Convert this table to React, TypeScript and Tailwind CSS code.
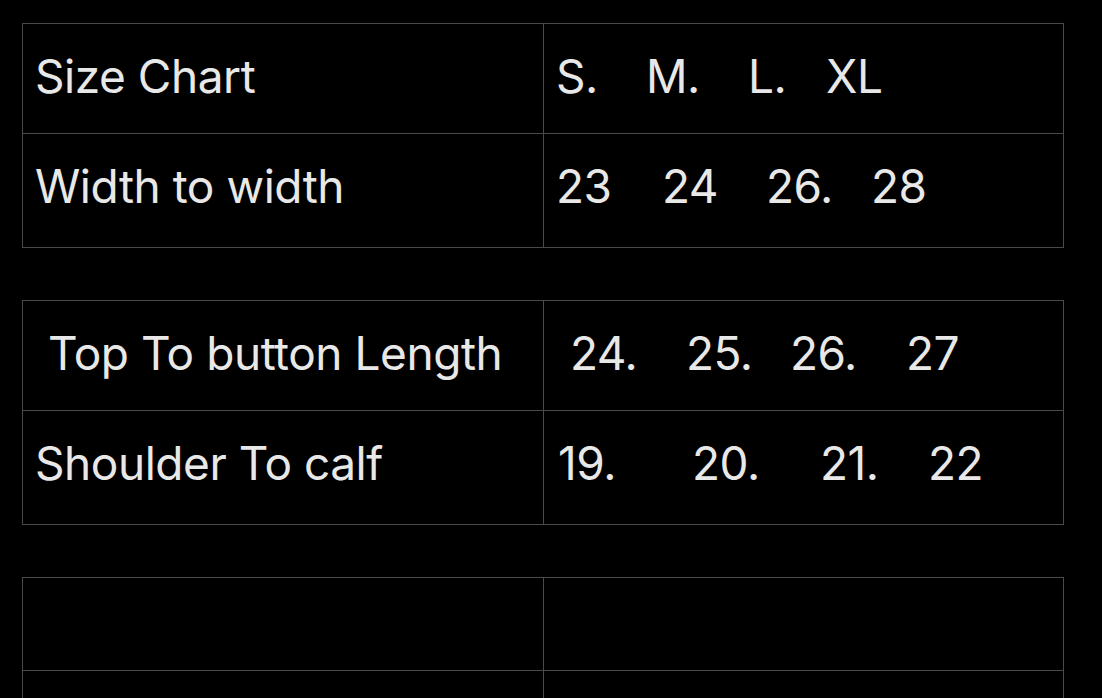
import React from 'react';

type Row = {
  label: string;
  labelPad?: string;
  values: { text: string; w: string }[];
  valuePad: string;
  height: string;
};

const tables: Row[][] = [
  [
    {
      label: 'Size Chart',
      height: 'h-[110px]',
      valuePad: 'pl-[12px]',
      values: [
        { text: 'S.', w: 'w-[90px]' },
        { text: 'M.', w: 'w-[102px]' },
        { text: 'L.', w: 'w-[78px]' },
        { text: 'XL', w: '' },
      ],
    },
    {
      label: 'Width to width',
      height: 'h-[114px]',
      valuePad: 'pl-[12px]',
      values: [
        { text: '23', w: 'w-[106px]' },
        { text: '24', w: 'w-[104px]' },
        { text: '26.', w: 'w-[105px]' },
        { text: '28', w: '' },
      ],
    },
  ],
  [
    {
      label: 'Top To button Length',
      labelPad: 'pl-[25px]',
      height: 'h-[110px]',
      valuePad: 'pl-[26px]',
      values: [
        { text: '24.', w: 'w-[116px]' },
        { text: '25.', w: 'w-[104px]' },
        { text: '26.', w: 'w-[116px]' },
        { text: '27', w: '' },
      ],
    },
    {
      label: 'Shoulder To calf',
      height: 'h-[114px]',
      valuePad: 'pl-[14px]',
      values: [
        { text: '19.', w: 'w-[134px]' },
        { text: '20.', w: 'w-[128px]' },
        { text: '21.', w: 'w-[108px]' },
        { text: '22', w: '' },
      ],
    },
  ],
];

function SizeTable({ rows }: { rows: Row[] }) {
  return (
    <div className="w-[1042px] border-l border-t border-[#4a4a4a] shrink-0">
      {rows.map((row) => (
        <div key={row.label} className={`grid grid-cols-[521px_520px] ${row.height}`}>
          <div className={`flex items-start pt-[29px] border-b border-r border-[#4a4a4a] whitespace-nowrap ${row.labelPad ?? 'pl-[12px]'}`}>
            {row.label}
          </div>
          <div className={`flex items-start pt-[29px] border-b border-r border-[#4a4a4a] whitespace-nowrap ${row.valuePad}`}>
            {row.values.map((v, i) => (
              <span key={i} className={`inline-block shrink-0 ${v.w}`}>
                {v.text}
              </span>
            ))}
          </div>
        </div>
      ))}
    </div>
  );
}

export default function App() {
  return (
    <main className="h-[698px] overflow-hidden bg-black pl-[22px] pt-[23px] flex flex-col gap-[52px] text-[#e8e8e8] text-[46px] leading-none tracking-[-0.01em] font-['Inter',sans-serif]">
      {tables.map((rows, i) => (
        <SizeTable key={i} rows={rows} />
      ))}
      <div className="w-[1042px] border-l border-t border-[#4a4a4a] shrink-0">
        <div className="grid grid-cols-[521px_520px] h-[93px]">
          <div className="border-b border-r border-[#4a4a4a]" />
          <div className="border-b border-r border-[#4a4a4a]" />
        </div>
        <div className="grid grid-cols-[521px_520px] h-[93px]">
          <div className="border-b border-r border-[#4a4a4a]" />
          <div className="border-b border-r border-[#4a4a4a]" />
        </div>
      </div>
    </main>
  );
}
